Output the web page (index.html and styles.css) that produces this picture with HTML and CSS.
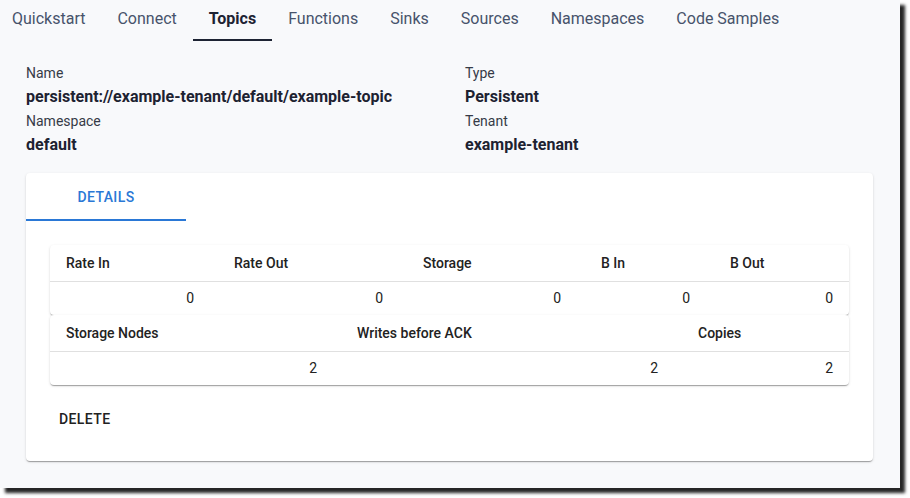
FILE: index.html
```html
<!DOCTYPE html>
<html>
<head>
<meta charset="utf-8">
<link rel="stylesheet" href="styles.css">
</head>
<body>
<div class="window">
  <nav class="nav">
    <a class="nav-tab">Quickstart</a>
    <a class="nav-tab">Connect</a>
    <a class="nav-tab active">Topics</a>
    <a class="nav-tab">Functions</a>
    <a class="nav-tab">Sinks</a>
    <a class="nav-tab">Sources</a>
    <a class="nav-tab">Namespaces</a>
    <a class="nav-tab">Code Samples</a>
  </nav>
  <section class="info">
    <div class="field">
      <div class="label">Name</div>
      <div class="value">persistent://example-tenant/default/example-topic</div>
    </div>
    <div class="field">
      <div class="label">Type</div>
      <div class="value">Persistent</div>
    </div>
    <div class="field">
      <div class="label">Namespace</div>
      <div class="value">default</div>
    </div>
    <div class="field">
      <div class="label">Tenant</div>
      <div class="value">example-tenant</div>
    </div>
  </section>
  <div class="card">
    <div class="card-tabs">
      <div class="card-tab active">Details</div>
    </div>
    <div class="panel">
      <div class="paper">
        <table class="tbl tbl-a">
          <colgroup><col class="a1"><col class="a2"><col class="a3"><col class="a4"><col class="a5"></colgroup>
          <thead><tr><th>Rate In</th><th>Rate Out</th><th>Storage</th><th>B In</th><th>B Out</th></tr></thead>
          <tbody><tr><td>0</td><td>0</td><td>0</td><td>0</td><td>0</td></tr></tbody>
        </table>
      </div>
      <div class="paper">
        <table class="tbl tbl-b">
          <colgroup><col class="b1"><col class="b2"><col class="b3"></colgroup>
          <thead><tr><th>Storage Nodes</th><th>Writes before ACK</th><th>Copies</th></tr></thead>
          <tbody><tr><td>2</td><td>2</td><td>2</td></tr></tbody>
        </table>
      </div>
      <div class="actions">
        <button class="btn">Delete</button>
      </div>
    </div>
  </div>
</div>
</body>
</html>
```
FILE: styles.css
```css
* { box-sizing: border-box; }
html, body { margin: 0; padding: 0; background: #ffffff; }
body {
  font-family: Roboto, "Liberation Sans", sans-serif;
  min-height: 498px;
  padding-bottom: 10px;
}

.window {
  width: 900px;
  height: 488px;
  background: #f8f9fb;
  box-shadow: 5px 5px 3px rgba(0, 0, 0, 0.85);
  overflow: hidden;
}

.nav {
  display: flex;
  height: 41px;
  margin-left: -4px;
}
.nav-tab {
  display: flex;
  align-items: center;
  padding: 0 16px 3px;
  font-size: 16px;
  color: #47536b;
  border-bottom: 2px solid transparent;
  white-space: nowrap;
}
.nav-tab.active {
  color: #1d2333;
  font-weight: 700;
  border-bottom-color: #1d2333;
}

.info {
  display: grid;
  grid-template-columns: 439px 1fr;
  padding: 22px 26px 0;
  height: 132px;
  align-content: start;
}
.label {
  font-size: 14px;
  line-height: 20px;
  color: #363b47;
}
.value {
  font-size: 16px;
  line-height: 28px;
  font-weight: 700;
  color: #1d2231;
}

.card {
  margin-left: 26px;
  width: 847px;
  height: 288px;
  background: #ffffff;
  border-radius: 4px;
  box-shadow: 0 2px 1px -1px rgba(0,0,0,0.2), 0 1px 1px 0 rgba(0,0,0,0.14), 0 1px 3px 0 rgba(0,0,0,0.12);
}
.card-tabs { display: flex; height: 48px; }
.card-tab {
  width: 160px;
  display: flex;
  align-items: center;
  justify-content: center;
  padding-top: 2px;
  font-size: 14px;
  font-weight: 500;
  letter-spacing: 0.4px;
  text-transform: uppercase;
  color: #2a78d6;
  border-bottom: 2px solid #2a78d6;
}
.panel { padding: 24px; }

.paper {
  background: #ffffff;
  border-radius: 4px;
  box-shadow: 0 2px 1px -1px rgba(0,0,0,0.2), 0 1px 1px 0 rgba(0,0,0,0.14), 0 1px 3px 0 rgba(0,0,0,0.12);
}
.tbl {
  width: 799px;
  border-collapse: collapse;
  table-layout: fixed;
  font-size: 14px;
  color: #222222;
}
.tbl th {
  height: 36px;
  padding: 0 20px;
  text-align: left;
  font-weight: 500;
  border-bottom: 1px solid #e0e0e0;
}
.tbl td {
  height: 34px;
  padding: 0 20px;
  text-align: right;
  font-weight: 400;
}
.tbl th:first-child, .tbl td:first-child { padding-left: 16px; }
.tbl th:last-child, .tbl td:last-child { padding-right: 16px; }

.a1 { width: 164px; } .a2 { width: 189px; } .a3 { width: 178px; } .a4 { width: 129px; } .a5 { width: 139px; }
.b1 { width: 287px; } .b2 { width: 341px; } .b3 { width: 171px; }

.actions { padding-top: 16px; }
.btn {
  font-family: Roboto, "Liberation Sans", sans-serif;
  height: 36px;
  padding: 0 8px;
  margin-left: 1px;
  border: none;
  background: transparent;
  font-size: 14px;
  font-weight: 500;
  letter-spacing: 0.4px;
  text-transform: uppercase;
  color: #222222;
}
```
